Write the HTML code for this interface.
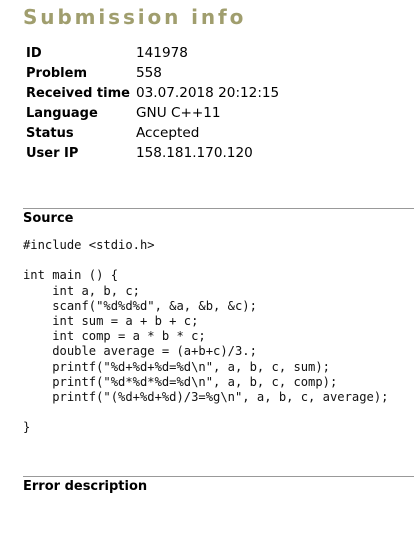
<!DOCTYPE html>
<html><head><meta charset="utf-8"><style>
body{margin:0;background:#fff;width:414px;height:534px;overflow:hidden;position:relative;font-family:"DejaVu Sans","Liberation Sans",sans-serif;color:#000}
.t{position:absolute;left:23px;top:5px;font-size:20px;font-weight:bold;letter-spacing:2.9px;color:#a09e6e}
.r{position:absolute;left:26px;font-size:13px;height:20px;line-height:20px}
.r b{display:inline-block;width:110px}
.r span{font-size:13.6px}
.hr{position:absolute;left:23px;right:0;height:1px;background:#999}
.h{position:absolute;left:23px;font-size:13px;font-weight:bold}
pre{position:absolute;left:23px;top:238px;margin:0;font-family:"DejaVu Sans Mono","Liberation Mono",monospace;font-size:12.15px;line-height:15.2px;color:#111}
</style></head><body>
<div class="t">Submission info</div>
<div class="r" style="top:43px"><b>ID</b><span>141978</span></div>
<div class="r" style="top:63px"><b>Problem</b><span>558</span></div>
<div class="r" style="top:83px"><b>Received time</b><span>03.07.2018 20:12:15</span></div>
<div class="r" style="top:103px"><b>Language</b><span>GNU C++11</span></div>
<div class="r" style="top:123px"><b>Status</b><span>Accepted</span></div>
<div class="r" style="top:143px"><b>User IP</b><span>158.181.170.120</span></div>
<div class="hr" style="top:208px"></div>
<div class="h" style="top:211px">Source</div>
<pre>#include &lt;stdio.h&gt;

int main () {
    int a, b, c;
    scanf("%d%d%d", &amp;a, &amp;b, &amp;c);
    int sum = a + b + c;
    int comp = a * b * c;
    double average = (a+b+c)/3.;
    printf("%d+%d+%d=%d\n", a, b, c, sum);
    printf("%d*%d*%d=%d\n", a, b, c, comp);
    printf("(%d+%d+%d)/3=%g\n", a, b, c, average);

}</pre>
<div class="hr" style="top:476px"></div>
<div class="h" style="top:479px">Error description</div>
</body></html>
